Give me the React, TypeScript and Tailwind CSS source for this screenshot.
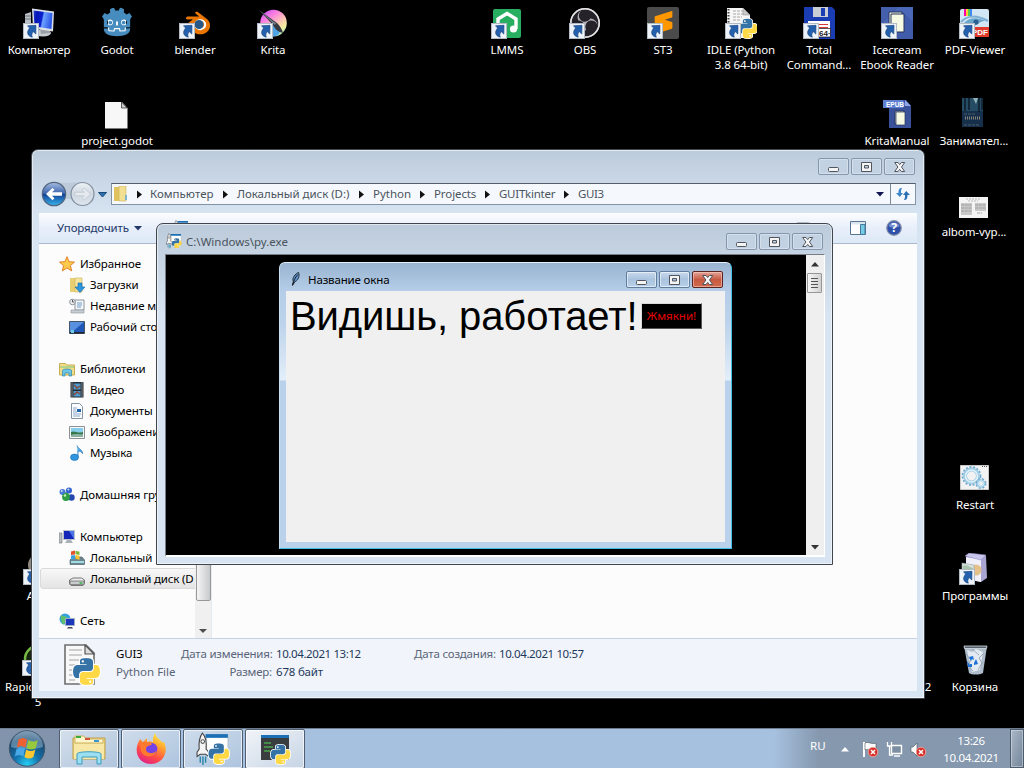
import React, { useId } from 'react';
import { SiBlender, SiGodotengine, SiObsstudio, SiSublimetext } from 'react-icons/si';

const PY =
  'M14.25.18l.9.2.73.26.59.3.45.32.34.34.25.34.16.33.1.3.04.26.02.2-.01.13V8.5l-.05.63-.13.55-.21.46-.26.38-.3.31-.33.25-.35.19-.35.14-.33.1-.3.07-.26.04-.21.02H8.77l-.69.05-.59.14-.5.22-.41.27-.33.32-.27.35-.2.36-.15.37-.1.35-.07.32-.04.27-.02.21v3.06H3.17l-.21-.03-.28-.07-.32-.12-.35-.18-.36-.26-.36-.36-.35-.46-.32-.59-.28-.73-.21-.88-.14-1.05-.05-1.23.06-1.22.16-1.04.24-.87.32-.71.36-.57.4-.44.42-.33.42-.24.4-.16.36-.1.32-.05.24-.01h.16l.06.01h8.16v-.83H6.18l-.01-2.75-.02-.37.05-.34.11-.31.17-.28.25-.26.31-.23.38-.2.44-.18.51-.15.58-.12.64-.1.71-.06.77-.04.84-.02 1.27.05zm-6.3 1.98l-.23.33-.08.41.08.41.23.34.33.22.41.09.41-.09.33-.22.23-.34.08-.41-.08-.41-.23-.33-.33-.22-.41-.09-.41.09z';

function Python({ x, y, s }: { x: number; y: number; s: number }) {
  return (
    <svg x={x} y={y} width={s} height={s} viewBox="-1 -1 26 26">
      <g stroke="#fff" strokeWidth="2" strokeLinejoin="round">
        <path d={PY} />
        <path d={PY} transform="rotate(180 12 12)" />
      </g>
      <path d={PY} fill="#3572a5" />
      <path d={PY} fill="#ffd845" transform="rotate(180 12 12)" />
    </svg>
  );
}

function Shortcut() {
  return (
    <g>
      <rect x=".5" y="16.5" width="15" height="15" fill="#eef3f9" stroke="#b4bbc4" />
      <path d="M4.500 18.800L13 18.300 12.800 27 10.400 24.800C8.800 26 8.400 28 9.300 30.200 4.500 29 3 25.500 6.600 21z" fill="#2460ab" stroke="#143f7c" strokeWidth=".6" />
    </g>
  );
}

function Gear({ cx, cy, r, w }: { cx: number; cy: number; r: number; w: number }) {
  return (
    <g fill="none">
      <circle cx={cx} cy={cy} r={r + w * 0.6} stroke="#6fa9cd" strokeWidth="2" strokeDasharray="2 1.6" />
      <circle cx={cx} cy={cy} r={r} stroke="#9fcbe4" strokeWidth={w} />
      <circle cx={cx} cy={cy} r={r - 0.5} stroke="#e0f1f9" strokeWidth={w * 0.4} />
    </g>
  );
}

type IconName =
  | 'computer' | 'godot' | 'blender' | 'krita' | 'lmms' | 'obs' | 'st3' | 'idle' | 'total' | 'ice' | 'pdf'
  | 'doc' | 'epub' | 'book' | 'album' | 'restart' | 'programs' | 'bin' | 'app' | 'rapid';

function drawing(name: IconName, id: string): React.ReactNode {
  const u = (n: string) => `url(#${id}${n})`;
  switch (name) {
    case 'computer':
      return (
        <>
          <defs><linearGradient id={id + 'a'} x2="1" y2=".2"><stop stopColor="#2b48d8" /><stop offset=".2" stopColor="#0717b4" /><stop offset=".5" stopColor="#0b22d0" /><stop offset=".58" stopColor="#6ea2ff" /><stop offset="1" stopColor="#2f5be8" /></linearGradient></defs>
          <path d="M2 7l6-2v18H2z" fill="#b9bfc4" /><path d="M2 9h6M2 12h6" stroke="#6d767d" />
          <ellipse cx="20" cy="26" rx="8" ry="3.500" fill="#c9cdd1" /><path d="M17 20l9 2 1 4-9 1z" fill="#9aa0a6" />
          <path d="M9 1.500l22 3-1 20-20-3z" fill="#dce1e6" /><path d="M10.500 3.500l19 2.500-1 16-17-2.500z" fill={u('a')} />
        </>
      );
    case 'godot':
      return (
        <>
          <path d="M7 11h18v14H7z" fill="#fff" />
          <SiGodotengine x="1" y="0" size="30" color="#478cbf" />
        </>
      );
    case 'blender':
      return (
        <>
          <circle cx="20" cy="18" r="8" fill="#fff" />
          <SiBlender x="3" y="2" size="28" color="#ea7600" />
          <circle cx="20" cy="17.500" r="4.500" fill="#265787" />
        </>
      );
    case 'krita':
      return (
        <>
          <defs>
            <linearGradient id={id + 'a'} x1=".1" x2=".8" y2="1"><stop stopColor="#c04cf8" /><stop offset=".3" stopColor="#fb7fe0" /><stop offset=".6" stopColor="#fbc7b6" /><stop offset=".8" stopColor="#f4ee9c" /><stop offset="1" stopColor="#9fe9d0" /></linearGradient>
          </defs>
          <circle cx="16.500" cy="16" r="13.300" fill={u('a')} /><path d="M8 28c3-9 7-12 12-9s3 9-1 10c-4 1-8 1-11-1z" fill="#4fa4e6" />
          <path d="M2 3l18 13c3 3 5 6 6 10-5-1-8-4-10-8z" fill="#353a42" /><path d="M2 3l15 12 2 1-1 2z" fill="#7a818b" />
        </>
      );
    case 'lmms':
      return (
        <>
          <rect x="2" y="2" width="28" height="29" rx="2" fill="#27ae60" />
          <path d="M7 24V12l9-5.500 9 5.500v10" fill="none" stroke="#fff" strokeWidth="3.400" /><circle cx="22.500" cy="22" r="3.600" fill="#fff" /><circle cx="10" cy="21" r="3" fill="#fff" />
        </>
      );
    case 'obs':
      return (
        <>
          <circle cx="16" cy="16" r="15" fill="#25222a" />
          <SiObsstudio x="1" y="1" size="30" color="#b5b4b8" />
          <circle cx="16" cy="16" r="14.200" fill="none" stroke="#e4e4e4" strokeWidth="1.500" />
        </>
      );
    case 'st3':
      return (
        <>
          <rect width="32" height="32" rx="2" fill="#4b4b4b" />
          <SiSublimetext x="5" y="4" size="23" color="#ff9800" />
        </>
      );
    case 'idle':
      return (
        <>
          <path d="M2 1h16l7 7v23H2z" fill="#f6f6f6" />
          <path d="M3.500 2v28" stroke="#444" strokeWidth="2" strokeDasharray="1.500 1.500" />
          <path d="M8 4h10M8 7h12M8 10h9M8 13h8" stroke="#a9a9a9" strokeDasharray="3 1" />
          <path d="M18 1v7h7z" fill="#c8c8c8" stroke="#888" strokeWidth=".5" />
          <Python x={12} y={11} s={21} />
        </>
      );
    case 'total':
      return (
        <>
          <path d="M1 0h28l3 3v29H1z" fill="#1b3db4" /><path d="M10 0h15v10H10z" fill="#c9cdd4" /><path d="M18 1h4v8h-4z" fill="#1b3db4" />
          <path d="M5 14h22v16H5z" fill="#fff" /><path d="M7 17.500h18M7 20.500h18M7 27h5" stroke="#d43a3a" />
          <rect x="15.500" y="21.500" width="12" height="8.500" fill="#fff" stroke="#111" strokeWidth=".7" />
          <text x="16" y="28.800" fontSize="8" fontWeight="bold" className="font-['Liberation_Sans']" fill="#222">64·</text>
        </>
      );
    case 'ice':
      return (
        <>
          <path d="M0 0h32v32H0z" fill="#4a67b8" /><path d="M0 0h18L0 18z" fill="#4460ad" /><path d="M22 5l10 10v17H12z" fill="#38529c" opacity=".5" />
          <path d="M8 5h13v18H8z" fill="#edf3df" stroke="#26335c" /><path d="M10 7h13v18H10z" fill="#f6fae3" stroke="#26335c" />
        </>
      );
    case 'pdf':
      return (
        <>
          <rect x="1" y="2" width="29" height="28" rx="2" fill="#d3e6f3" />
          <path d="M5 2h2v7H5z" fill="#f0a" /><path d="M7 2h2v7H7z" fill="#fc3" /><path d="M9 2h2v7H9z" fill="#5c5" /><path d="M11 2h2v7h-2z" fill="#48e" />
          <path d="M2 15c6-7 16-7 27-1" fill="none" stroke="#7db0d2" strokeWidth="2" />
          <path d="M4 17c6-7 14-7 22-3-6 0-7 5-13 5-5 0-6-1-9-2z" fill="#6ba6cd" /><circle cx="17" cy="15" r="2.600" fill="#2a5f8e" />
          <path d="M13 20h17v10H13z" fill="#e23b2c" />
          <text x="13" y="28" fontSize="8" fontWeight="bold" className="font-['Liberation_Sans']" fill="#fff">PDF</text>
        </>
      );
    case 'doc':
      return (
        <>
          <path d="M4 4h17l5.500 6v20.500H4z" fill="#f7f7f7" /><path d="M20.500 4v6H26z" fill="#cfcfcf" stroke="#222" strokeWidth=".7" />
        </>
      );
    case 'epub':
      return (
        <>
          <path d="M8 2h17l5 6v22H8z" fill="#3a5299" /><path d="M24 2v6h6z" fill="#8ea7e8" />
          <path d="M2 2h20l2 4-2 4H2z" fill="#5f80d2" />
          <text x="5" y="8.500" fontSize="6.500" fontWeight="bold" className="font-['Liberation_Sans']" fill="#fff">EPUB</text>
          <path d="M14 13h9v13h-9z" fill="#edf3df" stroke="#26335c" /><path d="M15 14h9v13h-9z" fill="#f6fae3" stroke="#26335c" strokeWidth=".7" />
        </>
      );
    case 'book':
      return (
        <>
          <path d="M4 0h21v29H4z" fill="#16304b" /><path d="M4 0h21v13H4z" fill="#254c63" />
          <path d="M7 0v13M11 0v12M21 0v14M24 0v12" stroke="#0c1c2c" strokeWidth="1.500" /><path d="M15 0h5l-2 6z" fill="#a9ccd0" opacity=".8" />
          <path d="M6 16h12M6 27h15" stroke="#5d6670" strokeDasharray="3 1" strokeWidth=".8" /><path d="M7 20h16" stroke="#87827a" strokeWidth="3" strokeDasharray="1 1" />
        </>
      );
    case 'album':
      return (
        <>
          <path d="M1 8h29v21H1z" fill="#f4f4f4" /><path d="M8 10h14M10 12h10" stroke="#b9b9b9" strokeDasharray="2 1" />
          <path d="M3 14h11v12H3zM17 14h11v8H17z" fill="#c8c8c8" /><path d="M3 16h11M3 19h11M3 22h11M17 16h11M17 19h11M19 24h5" stroke="#969696" strokeDasharray="3 .7" strokeWidth=".8" />
        </>
      );
    case 'restart':
      return (
        <>
          <path d="M1.500 3.500h28v24h-28z" fill="#f2f2f2" stroke="#c8c8c8" /><path d="M23 4.500h5" stroke="#555" strokeDasharray="1 1" />
          <Gear cx={12.500} cy={14} r={6.500} w={4} /><Gear cx={22} cy={21.500} r={3} w={2.500} />
        </>
      );
    case 'programs':
      return (
        <>
          <path d="M7 4l4-3 16 2 1 22-6 4-15-3z" fill="#aaa6d3" /><path d="M7 4l15 2v23L7 26z" fill="#f0effa" /><path d="M6 3l4-3 17 2-5 5z" fill="#c9c6ee" stroke="#8581b5" strokeWidth=".5" />
          <circle cx="17" cy="17" r="5.500" fill="#e3b56e" opacity=".8" /><path d="M3 10l12 2v17L3 26z" fill="#d8e2e0" stroke="#98a5a0" strokeWidth=".6" /><path d="M4 13c4-2 5 1 10 2v12H4z" fill="#a9c4ac" />
        </>
      );
    case 'bin':
      return (
        <>
          <path d="M5 2h23l-4 27c-4 2-11 2-14 0z" fill="#aebccb" /><path d="M8 6l5 2 4-3 7 3-3 18-8 2z" fill="#e3eaf1" />
          <path d="M7 10l5 6-3 5 5 6M25 9l-5 5 3 5-4 7M13 5l7 6" stroke="#8c9cae" fill="none" strokeWidth=".8" />
          <path d="M5 2h23l-.5 2.500h-22z" fill="#55606c" stroke="#d6dee6" strokeWidth=".8" />
          <path d="M10 13l4-1 1 4-2-1-1 2zM17 15l2 5-4 1v-2zM8 17l3 4v-1h2v3H9z" fill="#1e72d8" />
        </>
      );
    case 'app':
      return <circle cx="16" cy="12" r="11" fill="#8d8880" />;
    case 'rapid':
      return <circle cx="16" cy="15" r="13" fill="#15250e" stroke="#78b844" strokeWidth="2.500" />;
  }
}

function DeskIcon({ name, cut, x, row, lines }: { name?: IconName; cut?: boolean; x: number; row: number; lines: string[] }) {
  const id = useId().replace(/[^a-zA-Z0-9]/g, '');
  return (
    <div className="absolute flex w-[90px] flex-col items-center text-white" style={{ left: x - 45, top: 7 + row * 91 }}>
      <svg width="32" height="32" viewBox="0 0 32 32" className="shrink-0">
        {name && drawing(name, id)}
        {cut && <Shortcut />}
      </svg>
      <div className="mt-[3px] flex flex-col items-center">
        {lines.map((l) => (
          <span key={l} className="h-[15px] whitespace-pre text-[11.5px] leading-[15px] tracking-[-0.1px]">{l}</span>
        ))}
      </div>
    </div>
  );
}

function CaptionButtons({ active }: { active?: boolean }) {
  const base = 'flex h-[17px] w-[31px] items-center justify-center rounded-[2px] border ';
  const plain = active
    ? 'border-[#5f7d9f] bg-gradient-to-b from-[#c8daed] via-[#a9c3de] to-[#b9d0e9] shadow-[inset_0_0_0_1px_rgba(255,255,255,.55)]'
    : 'border-[#8496ad] bg-[#c3d2e3] shadow-[inset_0_0_0_1px_rgba(255,255,255,.3)]';
  return (
    <div className="flex gap-[2px]">
      <div className={base + plain}>
        <svg width="12" height="12"><rect x=".5" y="6.500" width="10" height="4" rx="1" fill="#f4f4f4" stroke="#50555e" /></svg>
      </div>
      <div className={base + plain}>
        <svg width="12" height="12"><path d="M.5 1.500h10v9h-10zM3.500 4.500h4v2.500h-4z" fill="#f4f4f4" fillRule="evenodd" stroke="#50555e" /></svg>
      </div>
      <div className={base + (active ? 'border-[#5b2322] bg-gradient-to-b from-[#e3a397] via-[#c75a42] via-50% to-[#d06a4c] shadow-[inset_0_0_0_1px_rgba(255,220,210,.5)]' : plain)}>
        <svg width="12" height="12"><path d="M.7 1.500h3.300L5.700 3.600 7.400 1.500h3.300L7.500 6l3.200 4.500H7.400L5.700 8.400 4 10.500H.7L3.900 6z" fill="#f6f6f6" stroke="#50555e" /></svg>
      </div>
    </div>
  );
}

function Crumb({ text, cls, last }: { text: string; cls: string; last?: boolean }) {
  return (
    <div className="flex items-center">
      <span className={'whitespace-nowrap ' + cls}>{text}</span>
      {!last && <svg width="23" height="9"><path d="M9 .5l5 4-5 4z" fill="#111" /></svg>}
    </div>
  );
}

const SMALL: Record<string, React.ReactNode> = {
  star: <path d="M8 .7l2.100 5 5.400.4-4.100 3.500 1.300 5.300L8 12l-4.700 2.900 1.300-5.300L.5 6.100l5.400-.4z" fill="#fcc94d" stroke="#e0832a" />,
  down: <><path d="M1 1h6v14H1z" fill="#e8cf74" /><path d="M6 1h7v14H6z" fill="#f5e5a0" stroke="#cfae4e" strokeWidth=".6" /><path d="M9 6h4v4h3l-5 5.500L6 10h3z" fill="#2d97dd" stroke="#1763a6" strokeWidth=".6" /></>,
  recent: <><path d="M6 2h9v10H6z" fill="#f5f7f9" stroke="#8a949d" /><path d="M8 5h5M8 7h5M8 9h4" stroke="#6d9cc5" /><path d="M2 12h13v3H2z" fill="#c7cdd2" stroke="#8a949d" strokeWidth=".6" /><circle cx="3.500" cy="4" r="2.800" fill="#eee" stroke="#8a949d" /><path d="M3.500 2v2h1.500" stroke="#555" fill="none" /></>,
  desk: <><path d="M.5 2.500h15v12H.5z" fill="#2058b8" stroke="#456" /><path d="M1 3h14L3 13H1z" fill="#5a90e0" /><path d="M1 13h14v1.500H1z" fill="#223" /><path d="M2 11h3v3H2z" fill="#6cd" /></>,
  lib: <><path d="M.5 2.500h6l1 1.500h8v10H.5z" fill="#f0dd8c" stroke="#c9ad52" /><path d="M1 5h14v2H1z" fill="#b6d489" /><path d="M3.500 15V9.500c0-2 9-2 9 0V15h-2.500v-3H6v3z" fill="#6cc4e8" stroke="#2f87ad" strokeWidth=".7" /></>,
  video: <><path d="M1.500 0h13v15.500h-13z" fill="#252b30" /><path d="M4.500 1.500h7v6h-7zM4.500 9h7v5.500h-7z" fill="#4e9bd0" /><path d="M3 .5V15M13 .5V15" stroke="#ddd" strokeDasharray="1 1" /><path d="M5 3l3 3 3-2M5 13l3-3 3 2" fill="none" stroke="#8a4a3a" strokeWidth="1.500" /></>,
  docs: <><path d="M2.500.5h8l3 3v12h-11z" fill="#fafcff" stroke="#8492a1" /><path d="M4 5h4M4 7h3M4 9h4M4 11h8M4 13h7" stroke="#8ba6c8" /><path d="M8 6h4v3H8z" fill="#1f62a8" /></>,
  pics: <><path d="M.5 2.500h15v12H.5z" fill="#f8f8f8" stroke="#8b9196" /><path d="M2 4h12v9H2z" fill="#85cdea" /><path d="M2 8c4-2 6 2 12 0v5H2z" fill="#35764a" /><path d="M2 11c4-2 8 0 12-1v3H2z" fill="#8bb0a2" /></>,
  music: <><path d="M8 .5c1 4 5 3 5.500 8-1-2-3-2.500-4.500-2.500v7" fill="#58b0ea" stroke="#1e74ba" strokeWidth=".8" /><ellipse cx="5.500" cy="12.300" rx="4" ry="3.200" fill="#2f95df" stroke="#1a69ad" strokeWidth=".6" /></>,
  group: <><path d="M4 4l8 8M4 10L11 3" stroke="#6d86b5" strokeWidth="2" /><circle cx="10" cy="3.500" r="3" fill="#2f5fd0" /><circle cx="3.500" cy="5" r="3" fill="#4778d8" /><circle cx="12.500" cy="10.500" r="3.200" fill="#2348ae" /><circle cx="7" cy="10" r="3.900" fill="#2d9e45" /><circle cx="2.800" cy="4" r="1" fill="#cde" /><circle cx="9.400" cy="2.500" r="1" fill="#cde" /><circle cx="6" cy="8.500" r="1.200" fill="#ceb" /></>,
  comp: <><path d="M0 4h3v10H0z" fill="#b7bec4" stroke="#6c7378" strokeWidth=".6" /><path d="M4.500 1.500h11v9h-11z" fill="#1527b8" stroke="#b9c2c9" /><path d="M10 2h5v8z" fill="#4c74e8" /><path d="M8 11h4l2 3H6z" fill="#a9b1b8" /></>,
  diskc: <><path d="M1 10l3-3h9l2.500 3v4.500H1z" fill="#6f858d" stroke="#3c545c" strokeWidth=".6" /><path d="M2 11h13v2H2z" fill="#9edce4" /><path d="M2 1.500l4-1v4L2 5z" fill="#e5532d" /><path d="M6.500.8l4 1V5l-4-.7z" fill="#7db83a" /><path d="M2 5.500l4-.5v4l-4 .5z" fill="#39a1e3" /><path d="M6.500 5l4 .7v4l-4-1z" fill="#fac22e" /></>,
  diskd: <><path d="M.5 9l3.500-2h8.500l3 2v3.500l-1.500 2H2l-1.500-2z" fill="#ececec" stroke="#777" /><path d="M1 10h14v3.500H1z" fill="#c8cccf" stroke="#666" strokeWidth=".7" /><path d="M10.500 12h3" stroke="#39b54a" strokeWidth="1.500" /></>,
  net: <><circle cx="6" cy="6" r="5.500" fill="#35a0e0" /><path d="M2 2c3 2 5 0 7 4s-3 3-4 5-4-4-3-9z" fill="#5fc16b" /><path d="M6.500 5.500h9v7h-9z" fill="#1b37ba" stroke="#9fb1c2" /><path d="M9 14h4l1 1.500H8z" fill="#445" /></>,
};

function Small({ n }: { n: string }) {
  return <svg width={16} height={16} viewBox="0 0 16 16" className="shrink-0">{SMALL[n]}</svg>;
}

const NAV: ([string, string, number] | null)[] = [
  ['star', 'Избранное', 0], ['down', 'Загрузки', 1], ['recent', 'Недавние места', 1], ['desk', 'Рабочий стол', 1], null,
  ['lib', 'Библиотеки', 0], ['video', 'Видео', 1], ['docs', 'Документы', 1], ['pics', 'Изображения', 1], ['music', 'Музыка', 1], null,
  ['group', 'Домашняя группа', 0], null,
  ['comp', 'Компьютер', 0], ['diskc', 'Локальный', 1], ['diskd', 'Локальный диск (D', 2], null,
  ['net', 'Сеть', 0],
];

function Rocket({ s }: { s: number }) {
  return (
    <svg width={s} height={s} viewBox="0 0 32 32" className="shrink-0">
      <path d="M10 3h20v18H10z" fill="#fff" stroke="#9aa" strokeWidth=".5" /><path d="M9 2h21v3.500H9z" fill="#1c6fb4" />
      <path d="M6 1c4 4 4 9 3.500 15l2.500 3v4l-3-2H4l-3 2v-4l2-3C2.500 10 3 5 6 1z" fill="#f4f4f4" stroke="#444" /><circle cx="6.300" cy="9" r="1.700" fill="#fff" stroke="#555" />
      <path d="M4 23v6M6.500 23v8M9 23v6" stroke="#2584a8" strokeWidth="1.300" />
      <Python x={11} y={10} s={21} />
    </svg>
  );
}

function Explorer() {
  return (
    <div className="absolute left-[31px] top-[149px] flex h-[550px] w-[894px] flex-col rounded-t-[7px] border border-[#44494f] bg-gradient-to-b from-[#bccbdb] to-[#d7e4f2] to-[64px] px-[7px] pb-[7px] shadow-[inset_0_0_0_1px_rgba(255,255,255,.55)]">
      <div className="flex h-[32px] items-start justify-end pr-[2px] pt-[8px]"><CaptionButtons /></div>
      <div className="flex h-[31px] items-start">
        <svg width="72" height="27" viewBox="0 0 72 27" className="mt-[-1px] shrink-0">
          <defs>
            <linearGradient id="bk" y2="1" x2="0"><stop stopColor="#a7bde0" /><stop offset=".48" stopColor="#3c65ae" /><stop offset=".5" stopColor="#133d94" /><stop offset="1" stopColor="#35b7ee" /></linearGradient>
            <linearGradient id="fw" y2="1" x2="0"><stop stopColor="#eef2f6" /><stop offset=".5" stopColor="#cfd7e0" /><stop offset="1" stopColor="#dde6ee" /></linearGradient>
          </defs>
          <path d="M14 1c10 1 20 1 30 0v22c-6-4-9-5-15-5s-9 1-15 5z" fill="#bccad9" />
          <circle cx="15" cy="13" r="11.700" fill="url(#bk)" stroke="#53647c" strokeWidth="1.200" />
          <path d="M7 13l6.500-6 2 1.800-2.500 2.500H23v3.500H13l2.500 2.500-2 1.900z" fill="#fff" />
          <circle cx="43.500" cy="13" r="11.500" fill="url(#fw)" stroke="#808e9d" strokeWidth="1.200" />
          <path d="M51.500 13L45 7l-2 1.800 2.500 2.500H36v3.500h9.500L43 17.200l2 1.900z" fill="#e7ebef" stroke="#bcc5ce" strokeWidth=".7" />
          <path d="M59.500 11.500h8l-4 4.500z" fill="#2b70ad" stroke="#174a78" />
        </svg>
        <div className="mt-[1px] flex h-[22px] w-[805px] items-center border border-[#8493a3] border-t-[#555f69] bg-[#f5f9fd] text-[#4c545d]">
          <svg width="18" height="16" viewBox="0 0 18 16" className="ml-px mr-[6px] shrink-0"><path d="M1 1h5v14H1z" fill="#e0c35f" /><path d="M6 0h7v15H6z" fill="#f3df92" stroke="#cdb058" strokeWidth=".6" /><path d="M12 9h2v5h-2z" fill="#7fb4cf" /></svg>
          <svg width="13" height="9"><path d="M0 .5l5 4-5 4z" fill="#111" /></svg>
          <Crumb text="Компьютер" cls="w-[64px]" />
          <Crumb text="Локальный диск (D:)" cls="w-[113px] tracking-[-0.05px]" />
          <Crumb text="Python" cls="w-[38px]" />
          <Crumb text="Projects" cls="w-[42px] tracking-[-0.1px]" />
          <Crumb text="GUITkinter" cls="w-[56px] tracking-[-0.25px]" />
          <Crumb text="GUI3" cls="w-[25px] tracking-[-0.4px]" last />
          <svg width="9" height="5" className="ml-auto mr-[5px]"><path d="M0 0h8l-4 4.500z" fill="#101550" /></svg>
          <div className="flex h-full w-[25px] items-center justify-center border-l border-[#7b8896]">
            <svg width="16" height="14" viewBox="0 0 16 14"><path d="M7 1C4 1 3.500 3 3.500 6H1l3.800 4L8 6H6c0-2 0-3 1-5z" fill="#3b86c8" /><path d="M9 13c3 0 3.500-2 3.500-5H15l-3.800-4L8 8h2c0 2 0 3-1 5z" fill="#2b6fb5" /></svg>
          </div>
        </div>
      </div>
      <div className="flex h-[31px] shrink-0 items-center border-b border-[#a9b8cb] bg-gradient-to-b from-[#fbfdfe] via-[#e8effa] via-50% to-[#dde9f7] pl-[18px] text-[#24396a]">
        <span className="w-[72px] whitespace-nowrap tracking-[-0.15px]">Упорядочить</span>
        <svg width="9" height="5" className="ml-[5px]"><path d="M0 0h8l-4 4.500z" fill="#24396a" /></svg>
        <div className="ml-[30px] h-[16px]"><Rocket s={16} /></div>
        <div className="ml-auto flex items-center pr-[15px]">
          <svg width="14" height="12" className="mr-[40px]"><rect width="14" height="12" rx="2" fill="#b5bdc8" /></svg>
          <svg width="16" height="14"><path d="M.5.5h15v13H.5z" fill="#fff" stroke="#577592" /><path d="M1 1h14v2.500H1z" fill="#dbe5ee" /><path d="M10.500 3.500h4.500v10h-4.500z" fill="#74cbe5" stroke="#477899" /></svg>
          <svg width="16" height="16" className="ml-[20px]" viewBox="0 0 16 16"><circle cx="8" cy="8" r="7.300" fill="#2f50a8" stroke="#8a94ac" strokeWidth="1.200" /><path d="M2.500 6a6 6 0 0111 0c-3 2-8 2-11 0z" fill="#7690d0" /><text x="8" y="12.200" textAnchor="middle" fontSize="12" fontWeight="bold" fill="#fff">?</text></svg>
        </div>
      </div>
      <div className="flex min-h-0 flex-1 bg-[#fcfcfc]">
        <div className="w-[156px] shrink-0 overflow-hidden pt-[9px] text-black">
          {NAV.map((r, i) =>
            r ? (
              <div
                key={i}
                className={
                  'flex h-[21px] w-[156px] items-center gap-[5px] whitespace-nowrap ' +
                  (r[2] === 0 ? 'pl-[20px]' : r[2] === 1 ? 'pl-[30px]' : 'ml-[1px] rounded-l-[3px] border border-[#dadada] bg-gradient-to-b from-[#f8f8f8] to-[#e4e4e4] pl-[28px]')
                }
              >
                <Small n={r[0]} /><span className={r[2] === 2 ? 'tracking-[-0.2px]' : 'tracking-[-0.1px]'}>{r[1]}</span>
              </div>
            ) : (
              <div key={i} className="h-[21px]" />
            ),
          )}
        </div>
        <div className="flex w-[17px] flex-col items-center justify-between border-r border-[#e4eaf2] bg-[#f0f0f0]">
          <div className="h-[357px] w-[15px] rounded-[2px] border border-[#989898] bg-gradient-to-r from-[#f5f5f5] to-[#c8c9cc]" />
          <svg width="9" height="12"><path d="M0 3h8l-4 4z" fill="#4d4d4d" /></svg>
        </div>
        <div className="flex-1" />
      </div>
      <div className="flex h-[53px] shrink-0 border-t border-[#c5d3e5] bg-[#f1f5fb] pl-[24px] pt-[5px]">
        <svg width="40" height="43" viewBox="0 0 40 43" className="shrink-0">
          <path d="M2 1h21l8 8v31H2z" fill="#f8f8f8" stroke="#6e6e6e" strokeWidth="1.600" /><path d="M22 1v9h9z" fill="#ddd" stroke="#555" strokeWidth="1.200" />
          <path d="M6 6h13M6 11h13M6 16h18M6 21h11M6 26h8M6 31h6M6 36h6" stroke="#c0c0c0" strokeWidth="1.400" />
          <Python x={9} y={13} s={29} />
        </svg>
        <div className="ml-[13px] mt-[1px] w-[65px] leading-[18px]"><p className="tracking-[-0.2px] text-black">GUI3</p><p className="whitespace-nowrap text-[#5a6478]">Python File</p></div>
        <div className="mt-[1px] w-[91px] whitespace-nowrap text-right leading-[18px] tracking-[-0.2px] text-[#5a6478]"><p>Дата изменения:</p><p>Размер:</p></div>
        <div className="ml-[4px] mt-[1px] w-[138px] leading-[18px] tracking-[-0.4px] text-[#1e395b]"><p>10.04.2021 13:12</p><p className="tracking-[-0.2px]">678 байт</p></div>
        <div className="mt-[1px] w-[81px] whitespace-nowrap leading-[18px] tracking-[-0.2px] text-[#5a6478]">Дата создания:</div>
        <div className="ml-[4px] mt-[1px] leading-[18px] tracking-[-0.4px] text-[#1e395b]">10.04.2021 10:57</div>
      </div>
    </div>
  );
}

function ConsoleWindow() {
  return (
    <div className="absolute left-[156px] top-[223px] flex h-[342px] w-[677px] flex-col rounded-t-[7px] border border-[#41464d] bg-gradient-to-b from-[#bccbdb] to-[#d8e4f1] to-[90px] pb-[7px] pl-[8px] pr-[7px] shadow-[inset_0_0_0_1px_rgba(255,255,255,.55)]">
      <div className="flex h-[30px] items-start pl-[1px] pr-[2px] pt-[9px]">
        <Rocket s={16} />
        <span className="ml-[4px] mt-px text-[#4a525c]">C:\Windows\py.exe</span>
        <div className="ml-auto"><CaptionButtons /></div>
      </div>
      <div className="flex flex-1 border border-b-2 border-[#fff] border-l-[#777e87] border-t-[#777e87] bg-black">
        <div className="flex-1" />
        <div className="flex w-[18px] flex-col items-start bg-[#efefef] pt-[7px]">
          <svg width="9" height="5" className="ml-[5px]"><path d="M0 4.500h8L4 0z" fill="#333" /></svg>
          <div className="ml-[1px] mt-[6px] flex h-[20px] w-[15px] items-center justify-center rounded-[1px] border border-[#979797] bg-gradient-to-r from-[#f5f5f5] to-[#d2d2d4]">
            <svg width="7" height="10"><path d="M0 .5h7M0 3.500h7M0 6.500h7M0 9.500h7" stroke="#555" /></svg>
          </div>
          <svg width="9" height="5" className="mb-[5px] ml-[5px] mt-auto"><path d="M0 0h8L4 4.500z" fill="#333" /></svg>
        </div>
      </div>
    </div>
  );
}

function TkWindow() {
  return (
    <div className="absolute left-[279px] top-[262px] flex h-[287px] w-[453px] flex-col rounded-t-[6px] border border-[#3fc0e4] border-l-[#c8dff2] border-t-[#e4f1fb] bg-[linear-gradient(to_bottom,#99b4d1_0,#b5cde8_28px,#bcd3eb_60px,#e3eef9_117px,#b9d1ea_118px)] px-[6px] pb-[6px]">
      <div className="flex h-[28px] items-start pl-[4px] pr-[2px] pt-[8px]">
        <svg width="14" height="16" viewBox="0 0 16 16" className="ml-[-1px]"><path d="M4 15L5 11C3 7 7 2 11 .5c1 4 .5 8-4 10.500z" fill="#5e8fc8" stroke="#17212e" /><path d="M4 15.500C5 11 7 6 10 3" stroke="#111" fill="none" /></svg>
        <span className="ml-[5px] mt-px tracking-[-0.15px] text-black">Название окна</span>
        <div className="ml-auto"><CaptionButtons active /></div>
      </div>
      <div className="flex flex-1 items-start bg-[#f0f0f0] pl-[4px] pt-[2px]">
        <span className="w-[351px] whitespace-nowrap font-['Liberation_Sans',sans-serif] text-[40px] leading-[46px] tracking-[-0.1px] text-black">Видишь, работает!</span>
        <div className="mt-[10px] flex h-[26px] w-[61px] items-center justify-center border border-[#d9d9d9] border-b-[#555] border-r-[#555] bg-black text-[#e80000]">Жмякни!</div>
      </div>
    </div>
  );
}

function RedX({ x, y }: { x: number; y: number }) {
  return <g><circle cx={x} cy={y} r="4.800" fill="#d9302c" stroke="#f3b0a8" strokeWidth=".8" /><path d={`M${x - 2} ${y - 2}l4 4m0-4l-4 4`} stroke="#fff" strokeWidth="1.500" /></g>;
}

function Taskbar() {
  const btn = 'flex h-[40px] items-center justify-center rounded-[2px] border border-[#4f5e70] shadow-[inset_0_0_0_1px_rgba(255,255,255,.65)] ';
  return (
    <div className="absolute bottom-0 left-0 flex h-[40px] w-full items-stretch border-t border-[#6d7c8f] bg-gradient-to-r from-[#8294ac] from-[60px] via-[#a6c1df] via-[62px] to-[#a6c1df] to-[760px]">
      <div className="flex w-[59px] items-center pl-[8px]">
        <svg width="38" height="38" viewBox="0 0 38 38">
          <defs><radialGradient id="orb" cx=".5" cy=".95" r=".9"><stop stopColor="#25d0f5" /><stop offset=".4" stopColor="#1371ac" /><stop offset=".8" stopColor="#174a70" /><stop offset="1" stopColor="#4c7290" /></radialGradient></defs>
          <circle cx="19" cy="18.500" r="17.700" fill="url(#orb)" stroke="#41566e" /><path d="M3 17a16 16 0 0132 0c-10 3-22 3-32 0z" fill="#b9d0e2" opacity=".42" />
          <path d="M10.500 9.500c3-2 5.500-2 8.500 0l-1.600 8c-3-2-5.500-2-8.500 0z" fill="#ee6132" /><path d="M20.300 10c3 2 6.500 2 9.500 0l-2 8c-3 2-6 2-9.200 0z" fill="#97c93d" />
          <path d="M8.500 19c3-2 5.500-2 8.500 0l-1.700 7.500c-3-2-5.500-2-8.500 0z" fill="#49a8e8" /><path d="M18.200 19.500c3 2 6 2 9.200 0l-2 7.500c-3 2-6 2-9 0z" fill="#fdc633" />
        </svg>
      </div>
      <div className="flex gap-[2px]">
        <div className={btn + 'w-[60px] bg-gradient-to-br from-[#d4dfeb] to-[#b0c5dd]'}>
          <svg width="34" height="34" viewBox="0 0 34 34"><path d="M1 6h32v21H1z" fill="#f0dc8d" stroke="#bd9d43" /><path d="M3 4h9l2 3h17v4H3z" fill="#fff5ca" stroke="#ccb365" /><path d="M4 4h5v2H4z" fill="#3cab42" /><path d="M13 6h5v2h-5z" fill="#d1563a" /><path d="M22 8h5v2h-5z" fill="#3a96d3" /><path d="M2 12h30v15H2z" fill="#f7e8a8" /><path d="M5 32V22c0-3 24-3 24 0v10h-4v-7H10v7z" fill="#9cdff2" stroke="#3c9cbd" /></svg>
        </div>
        <div className={btn + 'w-[60px] bg-gradient-to-br from-[#cfdceb] to-[#adc4de]'}>
          <svg width="32" height="32" viewBox="0 0 32 32">
            <defs><linearGradient id="ff" x1=".8" x2=".3" y2="1"><stop stopColor="#fff44f" /><stop offset=".35" stopColor="#ffa52e" /><stop offset=".7" stopColor="#ff4a45" /><stop offset="1" stopColor="#e0218b" /></linearGradient></defs>
            <path d="M20 0c1 4 3 5 6 8 1 1 2 2 3 1 5 10-1 22-13 22C4 31-1 20 3 10l2-4 3 3 4-4v4c3-1 4-1 6 0 0-4 0-6 2-9z" fill="url(#ff)" />
            <circle cx="16" cy="16" r="6.300" fill="#7542e5" /><path d="M5 11c4-3 9-3 12 0-1 2-6 1-6 5 0 4 6 6 10 2-1 7-13 7-15 0z" fill="#ff7a2f" />
          </svg>
        </div>
        <div className={btn + 'w-[60px] bg-gradient-to-br from-[#cfdceb] to-[#adc4de]'}><Rocket s={34} /></div>
        <div className={btn + 'w-[60px] bg-gradient-to-br from-[#f1f4f8] to-[#c6d4e5]'}>
          <svg width="33" height="32" viewBox="0 0 33 32"><path d="M2 3h28v24H2z" fill="#3a3d40" /><path d="M2 2h28v3H2z" fill="#1c6fb4" /><path d="M5 10h7M5 14h9M5 18h6" stroke="#49a64c" strokeWidth="1.300" /><Python x={11} y={11} s={21} /></svg>
        </div>
      </div>
      <div className="ml-auto flex w-[250px] items-stretch bg-gradient-to-r from-[#a6c1df] to-[#8598ae] to-[45px] text-white">
        <span className="ml-[36px] mt-[9px] w-[31px] text-[11.500px] leading-[16px]">RU</span>
        <svg width="9" height="5" className="mt-[18px]"><path d="M0 4.500h8L4 0z" fill="#fff" /></svg>
        <svg width="17" height="18" className="ml-[12px] mt-[12px]"><path d="M2 1v15" stroke="#fff" strokeWidth="2" /><path d="M3 2c4-2 6 2 11 0v7c-5 2-7-2-11 0z" fill="#fff" stroke="#46505b" strokeWidth=".6" /><RedX x={11} y={11} /></svg>
        <svg width="17" height="16" className="ml-[7px] mt-[12px]"><path d="M5.500 4.500h10v8h-10z" fill="#7c8ea2" stroke="#fff" strokeWidth="1.400" /><path d="M8 15h6" stroke="#fff" strokeWidth="1.500" /><path d="M1.500 1v4h4V1M3.500 5v9H7" fill="none" stroke="#fff" strokeWidth="1.300" /></svg>
        <svg width="17" height="18" className="ml-[7px] mt-[12px]"><path d="M1 6h2l4-4v13l-4-4H1z" fill="#fff" stroke="#46505b" strokeWidth=".6" /><RedX x={11} y={11} /></svg>
        <div className="ml-[11px] mt-[3px] flex w-[66px] flex-col items-center text-[11.500px] leading-[17px] tracking-[-0.35px]"><span>13:26</span><span>10.04.2021</span></div>
        <div className="ml-auto w-[14px] border border-[#4d5c6d] bg-gradient-to-br from-[#aab8c7] to-[#74869b] shadow-[inset_0_0_0_1px_rgba(255,255,255,.35)]" />
      </div>
    </div>
  );
}

export default function App() {
  return (
    <div className="relative h-[768px] w-[1024px] overflow-hidden bg-black font-['Noto_Sans','Open_Sans',sans-serif] text-[11.5px] leading-[16px]">
      <DeskIcon name="computer" cut x={39} row={0} lines={['Компьютер']} />
      <DeskIcon name="godot" x={117} row={0} lines={['Godot']} />
      <DeskIcon name="blender" cut x={195} row={0} lines={['blender']} />
      <DeskIcon name="krita" cut x={273} row={0} lines={['Krita']} />
      <DeskIcon name="lmms" cut x={507} row={0} lines={['LMMS']} />
      <DeskIcon name="obs" cut x={585} row={0} lines={['OBS']} />
      <DeskIcon name="st3" cut x={663} row={0} lines={['ST3']} />
      <DeskIcon name="idle" cut x={741} row={0} lines={['IDLE (Python', '3.8 64-bit)']} />
      <DeskIcon name="total" cut x={819} row={0} lines={['Total', 'Command...']} />
      <DeskIcon name="ice" cut x={897} row={0} lines={['Icecream', 'Ebook Reader']} />
      <DeskIcon name="pdf" cut x={975} row={0} lines={['PDF-Viewer']} />
      <DeskIcon name="doc" x={117} row={1} lines={['project.godot']} />
      <DeskIcon name="epub" x={897} row={1} lines={['KritaManual']} />
      <DeskIcon name="book" x={974} row={1} lines={['Занимател...']} />
      <DeskIcon name="album" x={974} row={2} lines={['albom-vyp...']} />
      <DeskIcon name="restart" x={975} row={5} lines={['Restart']} />
      <DeskIcon name="programs" cut x={975} row={6} lines={['Программы']} />
      <DeskIcon name="bin" x={975} row={7} lines={['Корзина']} />
      <DeskIcon name="app" cut x={39} row={6} lines={['A      ']} />
      <DeskIcon name="rapid" cut x={38} row={7} lines={['RapidTyping', '5']} />
      <DeskIcon x={928} row={7} lines={['2']} />
      <Explorer />
      <ConsoleWindow />
      <TkWindow />
      <Taskbar />
    </div>
  );
}
